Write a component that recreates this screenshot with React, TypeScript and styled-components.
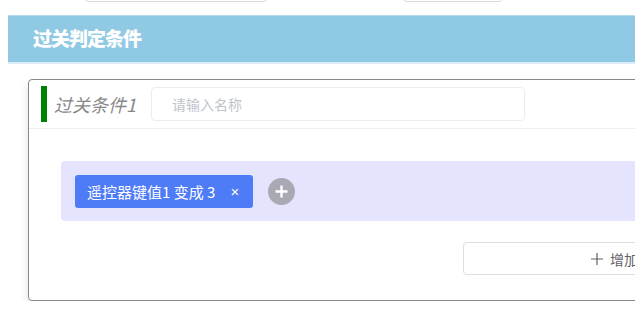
import React, { FC } from "react";
import styled, { createGlobalStyle } from "styled-components";

const GlobalStyle = createGlobalStyle`
  html, body {
    margin: 0;
    padding: 0;
    background: #fff;
    overflow: hidden;
  }
  body {
    font-family: "Liberation Sans", "Noto Sans CJK SC", sans-serif;
  }
`;

const Page = styled.div`
  width: 900px;
  padding-left: 8px;
`;

const PrevRow = styled.div`
  height: 2px;
  overflow: hidden;
  display: flex;
  align-items: flex-end;
`;

const PrevInput = styled.div<{ $left: number; $width: number }>`
  margin-left: ${(p) => p.$left}px;
  width: ${(p) => p.$width}px;
  height: 30px;
  flex-shrink: 0;
  border: 1px solid #d6dae3;
  border-radius: 4px;
  align-self: flex-end;
`;

const SectionBar = styled.div`
  margin-top: 13px;
  height: 42px;
  background: #90c9e3;
  border-top: 1px solid #b6dbec;
  border-bottom: 2px solid #dcedf6;
  display: flex;
  align-items: center;
  padding: 0 0 4px 25px;
  color: #fff;
  font-size: 19px;
  letter-spacing: -1px;
  font-weight: 900;
  font-family: "Noto Sans CJK SC", sans-serif;
`;

const Card = styled.div`
  margin: 15px 0 0 20px;
  border: 1px solid #888;
  border-radius: 4px;
  box-shadow: 0 6px 10px rgba(0, 0, 0, 0.12);
  background: #fff;
`;

const CardHead = styled.div`
  display: flex;
  align-items: center;
  height: 48px;
  padding-left: 12px;
  border-bottom: 1px solid #ebeef5;
`;

const Marker = styled.div`
  width: 6px;
  height: 36px;
  background: #008000;
`;

const Title = styled.span`
  margin-left: 7px;
  font-size: 18px;
  font-style: italic;
  color: #888;
  font-family: "Noto Sans CJK SC", sans-serif;
`;

const NameInput = styled.input`
  margin-left: 15px;
  width: 374px;
  height: 34px;
  box-sizing: border-box;
  border: 1px solid #ececf0;
  border-radius: 4px;
  padding: 0 20px;
  font-size: 14px;
  font-family: "Noto Sans CJK SC", sans-serif;
  outline: none;
  &::placeholder {
    color: #c0c4cc;
  }
`;

const CardBody = styled.div`
  padding: 32px 0 25px 32px;
  display: flex;
  flex-direction: column;
`;

const ConditionBox = styled.div`
  height: 60px;
  background: #e4e4fe;
  border-radius: 4px;
  display: flex;
  align-items: center;
  padding-left: 14px;
  gap: 15px;
`;

const Tag = styled.div`
  height: 33px;
  display: flex;
  align-items: center;
  padding: 0 14px 0 12px;
  background: #4e7bf6;
  border-radius: 3px;
  color: #fff;
  font-size: 15px;
  font-family: "Noto Sans CJK SC", sans-serif;
`;

const Close = styled.span`
  margin-left: 15px;
  font-size: 15px;
  font-family: "Liberation Sans", sans-serif;
`;

const AddCircle = styled.div`
  width: 27px;
  height: 27px;
  border-radius: 50%;
  background: #a9a9b3;
  display: flex;
  align-items: center;
  justify-content: center;
`;

const Footer = styled.div`
  margin-top: 21px;
  padding-left: 402px;
`;

const AddButton = styled.button`
  width: 330px;
  height: 33px;
  border: 1px solid #dcdfe6;
  border-radius: 4px;
  background: #fff;
  color: #606266;
  font-size: 14px;
  font-family: "Noto Sans CJK SC", sans-serif;
  display: flex;
  align-items: center;
  justify-content: center;
  gap: 6px;
`;

const App: FC = () => {
  return (
    <Page>
      <GlobalStyle />
      <PrevRow>
        <PrevInput $left={77} $width={180} />
        <PrevInput $left={136} $width={98} />
      </PrevRow>
      <SectionBar>过关判定条件</SectionBar>
      <Card>
        <CardHead>
          <Marker />
          <Title>过关条件1</Title>
          <NameInput placeholder="请输入名称" />
        </CardHead>
        <CardBody>
          <ConditionBox>
            <Tag>
              遥控器键值1 变成 3<Close>×</Close>
            </Tag>
            <AddCircle>
              <svg width="15" height="15" viewBox="0 0 15 15">
                <path d="M7.5 1.5v12M1.5 7.5h12" stroke="#fff" strokeWidth="2.4" />
              </svg>
            </AddCircle>
          </ConditionBox>
          <Footer>
            <AddButton>
              <svg width="14" height="14" viewBox="0 0 14 14">
                <path d="M7 1v12M1 7h12" stroke="#606266" strokeWidth="1.2" />
              </svg>
              增加条件
            </AddButton>
          </Footer>
        </CardBody>
      </Card>
    </Page>
  );
};

export default App;
